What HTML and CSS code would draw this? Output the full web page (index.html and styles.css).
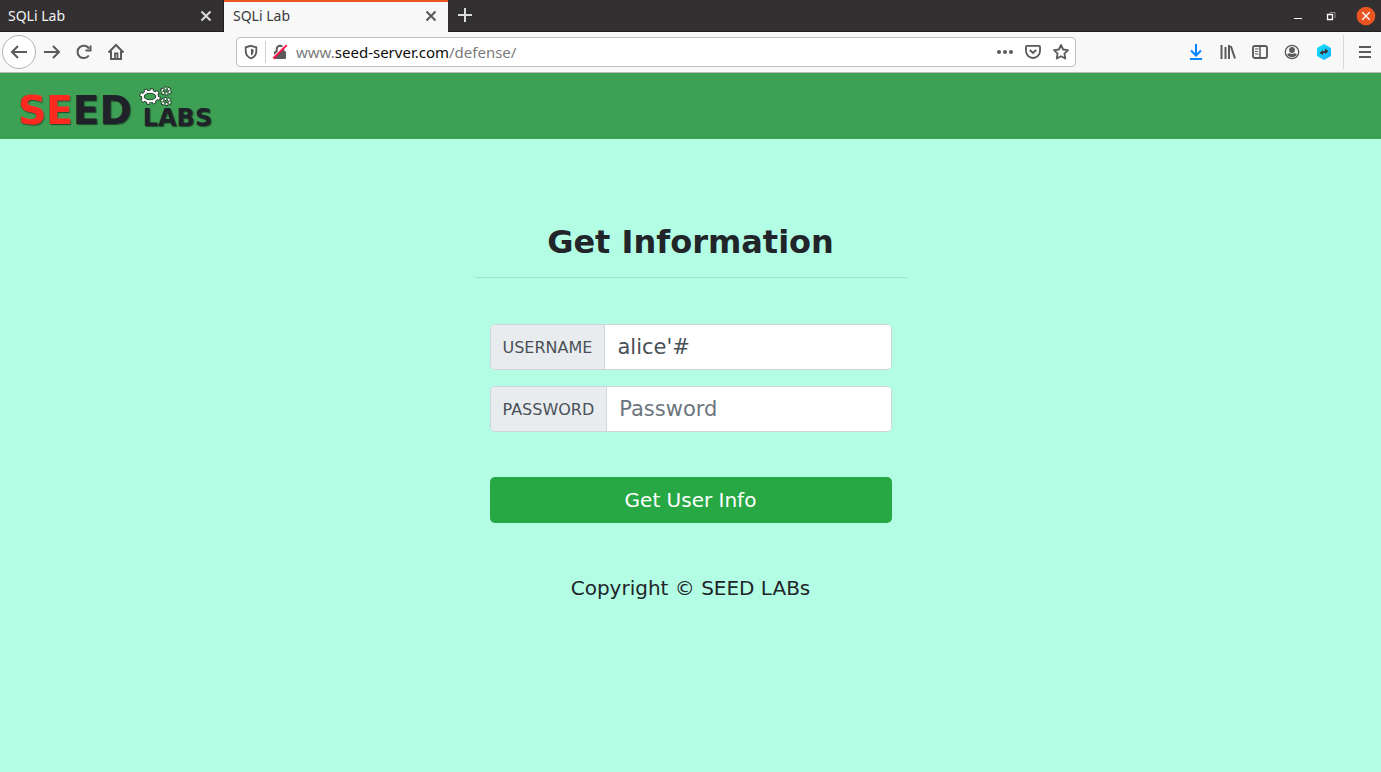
FILE: index.html
```html
<!DOCTYPE html>
<html lang="en">
<head>
<meta charset="utf-8">
<title>SQLi Lab</title>
<link rel="stylesheet" href="styles.css">
</head>
<body>
<div class="tabbar">
  <div class="tab">
    <span class="tab-title">SQLi Lab</span>
    <button class="tab-close" aria-label="Close tab"><svg width="16" height="16" viewBox="0 0 16 16"><path d="M3.5 3.5l9 9m0-9l-9 9"/></svg></button>
  </div>
  <div class="tab tab-active">
    <span class="tab-title">SQLi Lab</span>
    <button class="tab-close" aria-label="Close tab"><svg width="16" height="16" viewBox="0 0 16 16"><path d="M3.5 3.5l9 9m0-9l-9 9"/></svg></button>
  </div>
  <button class="new-tab" aria-label="New tab"><svg width="16" height="16" viewBox="0 0 16 16"><path d="M8 1v14M1 8h14"/></svg></button>
  <div class="window-controls">
    <button aria-label="Minimize"><svg width="16" height="16" viewBox="0 0 16 16"><path d="M4 10.5h8" fill="none" stroke="#fff"/></svg></button>
    <button aria-label="Restore"><svg width="16" height="16" viewBox="0 0 16 16" fill="none"><path d="M6.500 4.500h5.500v5.500" stroke="#8d8a8a"/><path d="M4.500 6.500h5v5h-5z" stroke="#fff" stroke-width="1.300"/></svg></button>
    <button aria-label="Close window"><svg width="20" height="20" viewBox="0 0 20 20"><circle cx="10" cy="10" r="9.300" fill="#e95420"/><path d="M6.300 6.300l7.400 7.400m0-7.400l-7.400 7.400" stroke="#fff" stroke-width="1.300"/></svg></button>
  </div>
</div>

<div class="toolbar">
  <button class="tool back" aria-label="Back"><svg width="18" height="18" viewBox="0 0 18 18"><path d="M17 9H2M8 3L2 9l6 6"/></svg></button>
  <button class="tool" aria-label="Forward"><svg width="18" height="18" viewBox="0 0 18 18"><path d="M1 9h15M10 3l6 6-6 6"/></svg></button>
  <button class="tool" aria-label="Reload"><svg width="16" height="16" viewBox="0 0 16 16"><path d="M12.800 11.500A6.200 6.200 0 1 1 13 4.600"/><path d="M14.500 1.500v5h-5"/></svg></button>
  <button class="tool" aria-label="Home"><svg width="18" height="18" viewBox="0 0 18 18"><path d="M1.500 9.500L9 2l7.500 7.500M4 8v8h10V8"/><path d="M8 15v-4.500h2.500V15" stroke-width="1.800"/></svg></button>
  <div class="urlbar">
    <button class="url-icon shield" aria-label="Tracking protection"><svg width="16" height="16" viewBox="0 0 16 16"><path d="M8 1.800l5.300 1.500v4c0 3.500-2 5.800-5.300 7-3.300-1.200-5.300-3.500-5.300-7v-4z" stroke-width="1.800"/><path d="M8 4.800l2.500.6v2c0 2-.8 3.200-2.500 4.200z" fill="#5a5a5b" stroke="none"/></svg></button>
    <span class="url-rule"></span>
    <button class="url-icon lock" aria-label="Connection is not secure"><svg width="16" height="16" viewBox="0 0 16 16"><rect x="2" y="7" width="12" height="8" rx="1.300" fill="#5a5a5b" stroke="none"/><path d="M4.700 7V5a3.300 3.300 0 0 1 6.600 0v2"/><path d="M1.300 13.300L13.800 .8" stroke="#fff" stroke-width="2"/><path d="M1.300 14.500L14.700 1.100" stroke="#ff0f43" stroke-width="2"/></svg></button>
    <div class="url-text" role="textbox" aria-label="Address" contenteditable="true" spellcheck="false">www.<span class="domain">seed-server.com</span>/defense/</div>
    <button class="url-icon" aria-label="Page actions"><svg width="18" height="16" viewBox="0 0 18 16"><g fill="#5a5a5b" stroke="none"><circle cx="3" cy="8" r="2"/><circle cx="9" cy="8" r="2"/><circle cx="15" cy="8" r="2"/></g></svg></button>
    <button class="url-icon" aria-label="Save to Pocket"><svg width="16" height="16" viewBox="0 0 16 16"><path d="M2 1.800h12c.6 0 1 .4 1 1V7A7 7 0 0 1 1 7V2.800c0-.6.4-1 1-1z" stroke-width="1.800"/><path d="M4.800 6L8 9l3.200-3"/></svg></button>
    <button class="url-icon" aria-label="Bookmark"><svg width="18" height="18" viewBox="0 0 18 18"><path d="M9 2l2.100 4.500 4.900.7-3.600 3.400.9 4.900L9 13.200l-4.300 2.300.9-4.900L2 7.200l4.900-.7z" stroke-width="1.800" stroke-linejoin="round"/></svg></button>
  </div>
  <button class="tool download" aria-label="Downloads"><svg width="16" height="18" viewBox="0 0 16 18"><path d="M8 1v11M3 7.500l5 5 5-5M2 16h12"/></svg></button>
  <button class="tool" aria-label="Library"><svg width="16" height="16" viewBox="0 0 16 16"><path d="M1.500 1v14M5.500 3v12M9 1v14M10.800 2l4.200 12.500"/></svg></button>
  <button class="tool" aria-label="Sidebars"><svg width="16" height="16" viewBox="0 0 16 16"><rect x="1" y="2" width="14" height="12" rx="2" stroke-width="1.900"/><path d="M8 2v12" stroke-width="1.500"/><path d="M3 5h3.500M3 7.500h3M3 10h3.500" stroke-width="1.200"/></svg></button>
  <button class="tool" aria-label="Account"><svg width="16" height="16" viewBox="0 0 16 16"><circle cx="8" cy="8" r="6.700" stroke-width="1.300"/><circle cx="8" cy="6" r="2.900" fill="#5a5a5b" stroke="none"/><path d="M3 10.800C4 9.600 5 9.300 5.800 9.300 7 10.200 9 10.200 10.200 9.300c.8 0 1.800.3 2.800 1.500C11.700 12.400 10 13.200 8 13.200s-3.700-.8-5-2.400z" fill="#5a5a5b" stroke="none"/></svg></button>
  <button class="tool" aria-label="Extension"><svg width="16" height="18" viewBox="0 0 16 18"><defs><linearGradient id="hex" x1="0" y1="0" x2="1" y2="1"><stop offset="0" stop-color="#10e5f5"/><stop offset="1" stop-color="#1badff"/></linearGradient></defs><path d="M8 1l7 4v8l-7 4-7-4V5z" fill="url(#hex)" stroke="none"/><path d="M3.500 10l3.500-3v5zM12.500 8.300L9 5.500v5.500zM7 8.500l2-.8v2L7 10.200z" fill="#3a3033" stroke="none"/></svg></button>
  <button class="tool menu" aria-label="Open menu"><svg width="16" height="16" viewBox="0 0 16 16"><path d="M2 3h12M2 8h12M2 13h12" stroke-width="2"/></svg></button>
</div>

<header class="navbar">
  <a class="logo" href="#" aria-label="SEED Labs">
    <span class="logo-seed"><span class="logo-red">SE</span>ED</span>
    <span class="logo-side">
      <svg width="36" height="22" viewBox="0 0 36 22" fill="none">
        <g stroke="#24372a"><ellipse cx="11" cy="10.500" rx="8.300" ry="5.700" pathLength="80" stroke-width="5" stroke-dasharray="6 4"/><ellipse cx="11" cy="10.500" rx="7.200" ry="4.800" stroke-width="3.600"/></g>
        <g stroke="#fff"><ellipse cx="11" cy="10.500" rx="8.300" ry="5.700" pathLength="80" stroke-width="3.200" stroke-dasharray="4 6" stroke-dashoffset="-1"/><ellipse cx="11" cy="10.500" rx="7.200" ry="4.800" stroke-width="1.900"/></g>
        <g stroke="#24372a" stroke-width="4"><ellipse cx="27" cy="5" rx="4" ry="2.600" pathLength="60" stroke-dasharray="7 3"/><ellipse cx="27" cy="15.500" rx="4" ry="2.600" pathLength="60" stroke-dasharray="7 3"/></g>
        <g stroke="#fff" stroke-width="2"><ellipse cx="27" cy="5" rx="4" ry="2.600" pathLength="60" stroke-dasharray="5 5" stroke-dashoffset="-1"/><ellipse cx="27" cy="15.500" rx="4" ry="2.600" pathLength="60" stroke-dasharray="5 5" stroke-dashoffset="-1"/></g>
      </svg>
      <span class="logo-labs">LABS</span>
    </span>
  </a>
</header>

<main class="content">
  <h1 class="title">Get Information</h1>
  <form class="form" onsubmit="return false">
    <div class="field">
      <label class="field-label" for="username">USERNAME</label>
      <input class="field-input" id="username" type="text" value="alice'#">
    </div>
    <div class="field">
      <label class="field-label" for="password">PASSWORD</label>
      <input class="field-input" id="password" type="password" placeholder="Password">
    </div>
    <button class="submit" type="submit">Get User Info</button>
  </form>
  <p class="copyright">Copyright © SEED LABs</p>
</main>
</body>
</html>
```

FILE: styles.css
```css
* { box-sizing: border-box; }

body {
  margin: 0;
  min-height: 100vh;
  background: #b3fde4;
  color: #212529;
  font-family: "DejaVu Sans", sans-serif;
}

button {
  margin: 0;
  padding: 0;
  border: 0;
  background: none;
  font: inherit;
}

svg { display: block; }

/* Browser tabs */
.tabbar {
  display: flex;
  height: 32px;
  background: #333031;
  border-bottom: 1px solid #1f1d1e;
  font: 14px "Noto Sans", sans-serif;
  color: #f4f4f4;
}

.tab {
  display: flex;
  align-items: center;
  justify-content: space-between;
  width: 224px;
  padding: 0 9px 0 8px;
  border-right: 1px solid #1f1d1e;
}

.tab-active {
  height: 32px;
  padding: 0 9px 3px;
  background: #f8f8f8;
  border-top: 2px solid #e95420;
  border-right: 0;
  color: #3a3a3c;
}

.tab-close svg, .new-tab svg {
  fill: none;
  stroke: #dcdcdc;
  stroke-width: 2;
}

.tab-close svg { stroke-width: 2; }

.tab-active .tab-close svg { stroke: #58585a; }

.new-tab { padding: 0 9px 1px; }

.window-controls {
  display: flex;
  align-items: center;
  gap: 17px;
  margin-left: auto;
  padding-right: 5px;
}

/* Navigation toolbar */
.toolbar {
  display: flex;
  align-items: center;
  height: 41px;
  padding-left: 2px;
  background: #f8f8f8;
  border-bottom: 1px solid #bcbcbc;
}

.tool {
  display: flex;
  flex: none;
  align-items: center;
  justify-content: center;
  width: 32px;
  height: 34px;
}

.toolbar svg {
  fill: none;
  stroke: #5a5a5b;
  stroke-width: 2;
}

.toolbar .download svg { stroke: #0a84ff; }

.back {
  width: 34px;
  border: 1px solid #b3b3b3;
  border-radius: 50%;
  background: #fff;
}

.menu {
  width: 38px;
  padding-left: 5px;
  border-left: 1px solid #d8d8d8;
  margin-left: 3px;
}

.urlbar {
  display: flex;
  flex: 1;
  align-items: center;
  height: 30px;
  min-width: 0;
  margin: 0 104px;
  border: 1px solid #bfbfbf;
  border-radius: 4px;
  background: #fff;
}

.url-icon {
  display: flex;
  flex: none;
  align-items: center;
  justify-content: center;
  width: 28px;
}

.url-rule {
  width: 1px;
  height: 22px;
  background: #cfcfcf;
}

.url-text {
  flex: 1;
  overflow: hidden;
  padding-left: 2px;
  color: #7b7b7c;
  font: 15px "Noto Sans", sans-serif;
  white-space: nowrap;
}

.domain { color: #0c0c0d; }

/* Site header */
.navbar {
  display: flex;
  align-items: center;
  height: 66px;
  padding: 2px 18px 0;
  background: #3ea055;
}

.logo {
  display: flex;
  align-items: flex-end;
  gap: 7px;
  color: #20222a;
  font-weight: bold;
  text-decoration: none;
  text-shadow: 1px 1px 1px #1f4a2b;
}

.logo-seed {
  font-size: 39px;
  line-height: 34px;
}

.logo-red { color: #ff2a1f; }

.logo-labs {
  display: block;
  padding-left: 4px;
  font-size: 24px;
  line-height: 20px;
}

/* Page content */
.content {
  max-width: 432px;
  margin: 0 auto;
  padding-top: 81px;
}

.title {
  margin: 0;
  padding-bottom: 13px;
  border-bottom: 1px solid #a0e4cd;
  font-size: 32px;
  line-height: 44px;
  text-align: center;
}

.form {
  display: flex;
  flex-direction: column;
  gap: 16px;
  padding: 46px 15px 0;
}

.field {
  display: flex;
  height: 46px;
  overflow: hidden;
  border: 1px solid #ced4da;
  border-radius: 5px;
  background: #fff;
}

.field-label {
  display: flex;
  align-items: center;
  padding: 0 12px;
  border-right: 1px solid #ced4da;
  background: #e9ecef;
  color: #495057;
  font-size: 16px;
}

.field-input {
  flex: 1;
  min-width: 0;
  padding: 0 12px;
  border: 0;
  outline: 0;
  background: #fff;
  color: #495057;
  font: 21px "DejaVu Sans", sans-serif;
}

.field-input::placeholder {
  color: #6c757d;
  opacity: 1;
}

.submit {
  height: 46px;
  margin-top: 29px;
  border-radius: 5px;
  background: #28a745;
  color: #fff;
  font-size: 20px;
}

.copyright {
  margin: 50px 0 0;
  font-size: 20px;
  line-height: 30px;
  text-align: center;
}
```
